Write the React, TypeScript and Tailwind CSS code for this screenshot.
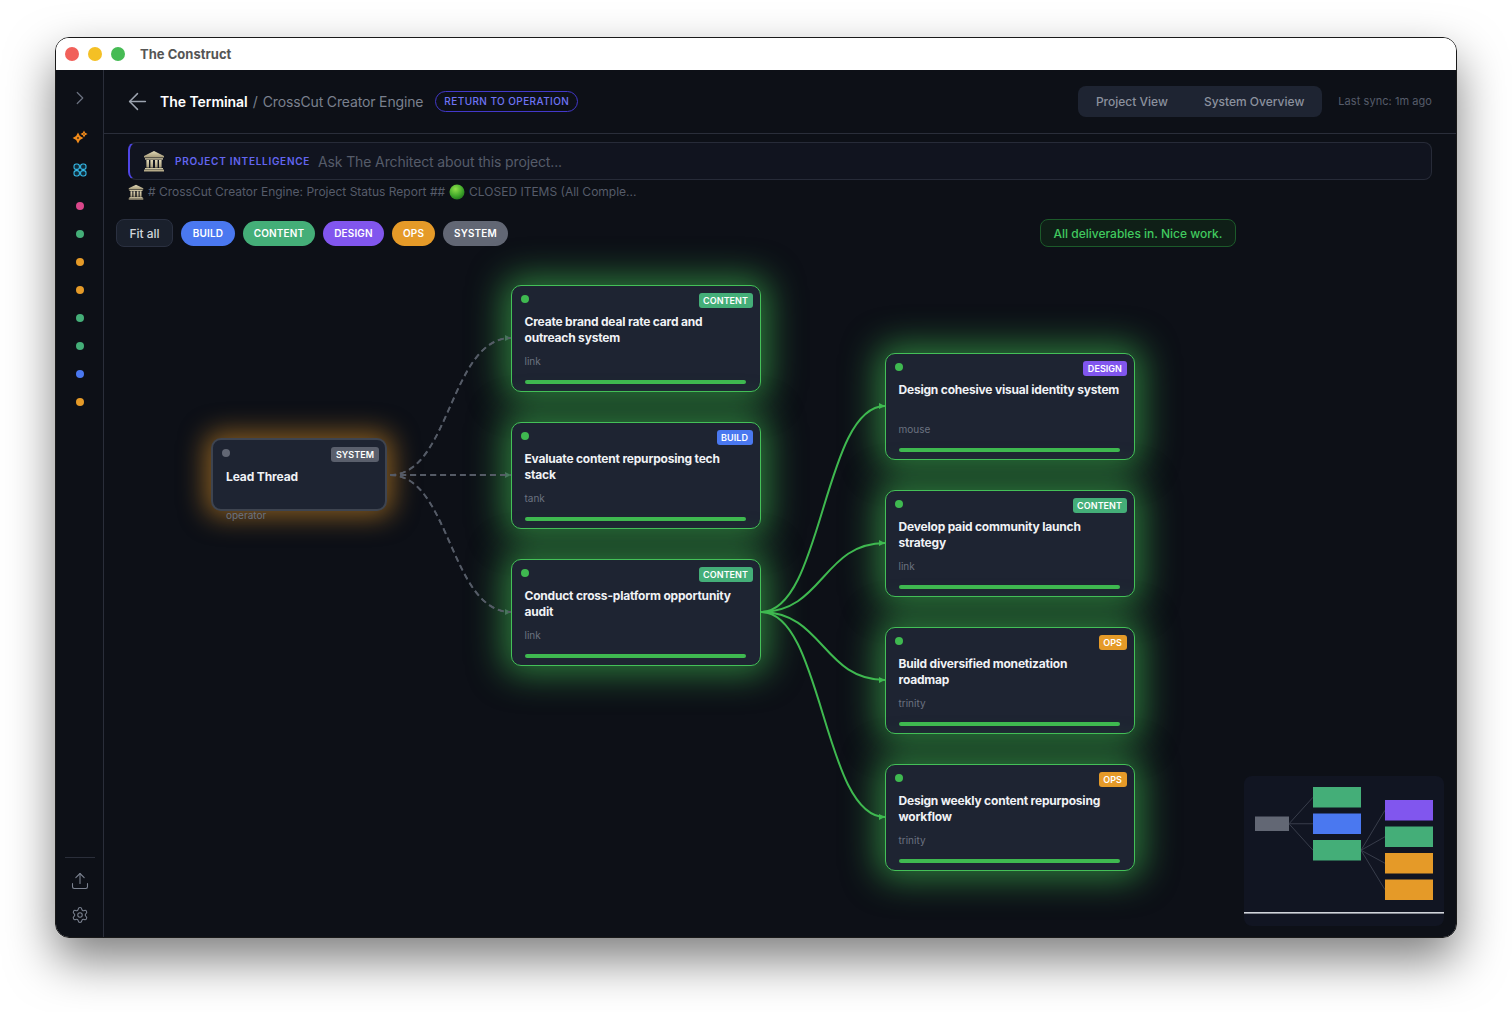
import React from "react";
import { ArrowLeft, ChevronRight, Settings, Upload } from "lucide-react";

const FONT = "font-['Inter','Noto_Sans',sans-serif]";

function Temple({ className }: { className: string }) {
  return (
    <svg viewBox="0 0 22 22" className={className}>
      <defs>
        <linearGradient id="tg" x1="0" y1="0" x2="0" y2="1">
          <stop offset="0" stopColor="#e2d9b8" />
          <stop offset="1" stopColor="#a59a78" />
        </linearGradient>
      </defs>
      <path d="M11 1 L21 6 L21 7.5 L1 7.5 L1 6 Z" fill="url(#tg)" />
      <rect x="2" y="8.2" width="18" height="1.4" fill="#cfc6a3" />
      <rect x="3.4" y="10" width="2.6" height="7.6" fill="url(#tg)" />
      <rect x="7.4" y="10" width="2.6" height="7.6" fill="url(#tg)" />
      <rect x="12" y="10" width="2.6" height="7.6" fill="url(#tg)" />
      <rect x="16" y="10" width="2.6" height="7.6" fill="url(#tg)" />
      <rect x="2" y="18" width="18" height="1.4" fill="#cfc6a3" />
      <rect x="1" y="19.6" width="20" height="1.9" fill="#b5aa88" />
    </svg>
  );
}

function GreenBall() {
  return (
    <svg viewBox="0 0 16 16" className="w-[16px] h-[16px] shrink-0">
      <defs>
        <radialGradient id="gb" cx="0.4" cy="0.3" r="0.8">
          <stop offset="0" stopColor="#8fe04a" />
          <stop offset="0.6" stopColor="#3fa62a" />
          <stop offset="1" stopColor="#1d6b1a" />
        </radialGradient>
      </defs>
      <circle cx="8" cy="8" r="7.5" fill="url(#gb)" />
    </svg>
  );
}

function Sparkle() {
  return (
    <svg viewBox="0 0 16 16" className="w-[16px] h-[16px]">
      <path fillRule="evenodd" d="M6 3.6 L7.9 7.1 L11.4 9 L7.9 10.9 L6 14.4 L4.1 10.9 L0.6 9 L4.1 7.1 Z M6 7.9 L4.9 9 L6 10.1 L7.1 9 Z" fill="#f08a1a" />
      <path fillRule="evenodd" d="M12 1.4 L13.2 3.8 L15.6 5 L13.2 6.2 L12 8.6 L10.8 6.2 L8.4 5 L10.8 3.8 Z M12 4.3 L11.3 5 L12 5.7 L12.7 5 Z" fill="#f08a1a" />
    </svg>
  );
}

function Grid() {
  return (
    <svg viewBox="0 0 14 14" className="w-[14px] h-[14px]" fill="#102c3a" stroke="#35b8e6" strokeWidth="1.1">
      <rect x="1" y="1" width="5.4" height="5.4" rx="2.2" />
      <rect x="7.6" y="1" width="5.4" height="5.4" rx="2.2" />
      <rect x="1" y="7.6" width="5.4" height="5.4" rx="2.2" />
      <rect x="7.6" y="7.6" width="5.4" height="5.4" rx="2.2" />
    </svg>
  );
}

type NodeData = {
  pos: string;
  tag: string;
  tagCls: string;
  title: string;
  sub: string;
};

const nodes: NodeData[] = [
  { pos: "left-[407px] top-[26px]", tag: "CONTENT", tagCls: "bg-[#44ae78]", title: "Create brand deal rate card and outreach system", sub: "link" },
  { pos: "left-[407px] top-[163px]", tag: "BUILD", tagCls: "bg-[#4a78f0]", title: "Evaluate content repurposing tech stack", sub: "tank" },
  { pos: "left-[407px] top-[300px]", tag: "CONTENT", tagCls: "bg-[#44ae78]", title: "Conduct cross-platform opportunity audit", sub: "link" },
  { pos: "left-[781px] top-[94px]", tag: "DESIGN", tagCls: "bg-[#8156ee]", title: "Design cohesive visual identity system", sub: "mouse" },
  { pos: "left-[781px] top-[231px]", tag: "CONTENT", tagCls: "bg-[#44ae78]", title: "Develop paid community launch strategy", sub: "link" },
  { pos: "left-[781px] top-[368px]", tag: "OPS", tagCls: "bg-[#e59a28]", title: "Build diversified monetization roadmap", sub: "trinity" },
  { pos: "left-[781px] top-[505px]", tag: "OPS", tagCls: "bg-[#e59a28]", title: "Design weekly content repurposing workflow", sub: "trinity" },
];

function Tag({ cls, children }: { cls: string; children: React.ReactNode }) {
  return (
    <span className={`h-[15px] px-[4.5px] rounded-[3px] text-[9px] leading-[15px] font-semibold tracking-[0.05px] text-white ${cls}`}>
      {children}
    </span>
  );
}

function Card({ n }: { n: NodeData }) {
  return (
    <div className={`absolute ${n.pos} w-[250px] h-[107px] rounded-[10px] border-[1.5px] border-[#44c058] bg-[#1e2432] pt-[6.5px] pr-[7.5px] pl-[12.5px] flex flex-col shadow-[0_0_34px_8px_rgba(63,185,80,0.62)]`}>
      <div className="flex justify-between items-start h-[15px] shrink-0">
        <span className="w-[8px] h-[8px] -ml-[4px] mt-[2px] rounded-full bg-[#3fb950]" />
        <Tag cls={n.tagCls}>{n.tag}</Tag>
      </div>
      <div className="mt-[6px] h-[32px] shrink-0 mr-[6.5px] text-[12px] leading-[16px] font-[650] text-[#f0f2f5] tracking-[-0.2px]">{n.title}</div>
      <div className="mt-[8px] text-[10px] leading-[14px] shrink-0 text-[#6b7280]">{n.sub}</div>
      <div className="mt-[12px] mr-[6.5px] h-[4px] shrink-0 rounded-full bg-[#3fb950]" />
    </div>
  );
}

function Edges() {
  const dashed = [79, 216, 353];
  const solid = [147, 284, 421, 558];
  return (
    <svg className="absolute left-0 top-0 w-full h-full" fill="none">
      {dashed.map((y) => (
        <path key={y} d={`M286 216 C 346 216, 346 ${y}, 407 ${y}`} stroke="#4b5261" strokeWidth="1.8" strokeDasharray="6 4" />
      ))}
      {dashed.map((y) => (
        <path key={`a${y}`} d={`M401 ${y - 3} L407 ${y} L401 ${y + 3} Z`} fill="#4b5261" />
      ))}
      {solid.map((y) => (
        <path key={`b${y}`} d={`M775 ${y - 3} L781 ${y} L775 ${y + 3} Z`} fill="#3fb950" />
      ))}
    </svg>
  );
}

function GreenEdges() {
  const solid = [147, 284, 421, 558];
  return (
    <svg className="absolute left-0 top-0 w-full h-full pointer-events-none" fill="none">
      {solid.map((y) => (
        <path key={y} d={`M657 353 C 719 353, 719 ${y}, 781 ${y}`} stroke="#3fb950" strokeWidth="2" />
      ))}
      {[79, 216, 353].map((y) => (
        <path key={y} d={`M286 216 C 346 216, 346 ${y}, 407 ${y}`} stroke="#555b66" strokeWidth="1.8" strokeDasharray="6 4" />
      ))}
    </svg>
  );
}

function Minimap() {
  const boxes = [
    { x: 11, y: 40.5, w: 34, h: 14.5, f: "#626774" },
    { x: 69, y: 11, w: 48, h: 20.5, f: "#44ae78" },
    { x: 69, y: 37.5, w: 48, h: 20.5, f: "#4a78f0" },
    { x: 69, y: 64, w: 48, h: 20.5, f: "#44ae78" },
    { x: 141, y: 24, w: 48, h: 20.5, f: "#8156ee" },
    { x: 141, y: 50.5, w: 48, h: 20.5, f: "#44ae78" },
    { x: 141, y: 77, w: 48, h: 20.5, f: "#e59a28" },
    { x: 141, y: 103.5, w: 48, h: 20.5, f: "#e59a28" },
  ];
  return (
    <div className="absolute right-[12px] bottom-[11px] w-[200px] h-[150px] rounded-[8px] bg-[#111522] overflow-hidden">
      <svg viewBox="0 0 200 150" className="w-[200px] h-[150px]">
        {[21.25, 47.75, 74.25].map((y) => (
          <line key={y} x1="45" y1="47.75" x2="69" y2={y} stroke="#383d4b" strokeWidth="1" />
        ))}
        {[34.25, 60.75, 87.25, 113.75].map((y) => (
          <line key={y} x1="117" y1="74.25" x2="141" y2={y} stroke="#383d4b" strokeWidth="1" />
        ))}
        {boxes.map((b, i) => (
          <rect key={i} x={b.x} y={b.y} width={b.w} height={b.h} fill={b.f} />
        ))}
        <rect x="0" y="136" width="200" height="1.6" fill="#d1d5db" />
      </svg>
    </div>
  );
}

export default function App() {
  const dots = ["bg-[#d9468a]", "bg-[#44ae78]", "bg-[#e59a28]", "bg-[#e59a28]", "bg-[#44ae78]", "bg-[#44ae78]", "bg-[#4a78f0]", "bg-[#e59a28]"];
  return (
    <div className={`w-[1512px] h-[1012px] bg-white pt-[37px] pl-[55px] overflow-hidden ${FONT}`}>
      <div className="w-[1402px] h-[901px] rounded-[14px] border border-[#1a1a1a] overflow-hidden flex flex-col shadow-[0_22px_48px_rgba(0,0,0,0.5)]">
        {/* title bar */}
        <div className="h-[32px] shrink-0 bg-white flex items-center pl-[9px]">
          <span className="w-[14px] h-[14px] rounded-full bg-[#f1605a]" />
          <span className="w-[14px] h-[14px] rounded-full bg-[#f4c025] ml-[9px]" />
          <span className="w-[14px] h-[14px] rounded-full bg-[#46bb54] ml-[9px]" />
          <span className="ml-[15px] mt-[1px] text-[13px] font-bold tracking-[0.02px] text-[#555555]">The Construct</span>
        </div>
        <div className="flex-1 flex min-h-0 bg-[#0d1017]">
          {/* sidebar */}
          <div className="w-[48px] shrink-0 border-r border-[#2a2e3a] flex flex-col items-center">
            <ChevronRight className="mt-[17px] w-[22px] h-[22px] text-[#6b7280]" strokeWidth={1.3} />
            <div className="mt-[20px]"><Sparkle /></div>
            <div className="mt-[18px]"><Grid /></div>
            <div className="mt-[25px] flex flex-col gap-[20px]">
              {dots.map((d, i) => (
                <span key={i} className={`block w-[8px] h-[8px] rounded-full ${d}`} />
              ))}
            </div>
            <div className="mt-auto w-[30px] border-t border-[#2a2e3a]" />
            <Upload className="mt-[13px] w-[20px] h-[20px] text-[#7b8290]" strokeWidth={1.3} />
            <Settings className="mt-[15px] mb-[13px] w-[18px] h-[18px] text-[#7b8290]" strokeWidth={1.4} />
          </div>
          {/* main */}
          <div className="flex-1 min-w-0 flex flex-col">
            <div className="h-[64px] shrink-0 border-b border-[#2a2e3a] flex items-center pl-[24px] pr-[24px]">
              <ArrowLeft className="-ml-[4.5px] w-[27px] h-[27px] text-[#9ca3af]" strokeWidth={1.3} />
              <span className="ml-[9.5px] text-[14px] font-semibold tracking-[-0.05px] text-white">The Terminal</span>
              <span className="ml-[5px] text-[14px] text-[#7a808e]">/</span>
              <span className="ml-[5px] text-[14px] tracking-[-0.15px] text-[#7a808e]">CrossCut Creator Engine</span>
              <span className="ml-[12px] h-[21px] px-[8px] rounded-full border border-[#4338ca] text-[10px] leading-[19px] font-medium tracking-[0.42px] text-[#6f74f5]">RETURN TO OPERATION</span>
              <div className="ml-auto h-[31px] rounded-[8px] bg-[#1e2432] flex items-center pl-[18px] pr-[18px] gap-[36px] text-[12px] font-medium text-[#8b919e]">
                <span>Project View</span>
                <span>System Overview</span>
              </div>
              <span className="ml-[16px] text-[11px] tracking-[0.06px] text-[#565c6a]">Last sync: 1m ago</span>
            </div>
            <div className="shrink-0 pl-[24px] pr-[24px] pt-[8px]">
              <div className="h-[38px] rounded-[8px] border border-[#272b38] border-l-2 border-l-[#4f46e5] bg-[#11141f] flex items-center pl-[13px]">
                <Temple className="w-[22px] h-[22px]" />
                <span className="ml-[10px] text-[10px] font-semibold tracking-[0.72px] text-[#6366f1]">PROJECT INTELLIGENCE</span>
                <span className="ml-[8px] text-[14px] tracking-[-0.13px] text-[#565c6a]">Ask The Architect about this project...</span>
              </div>
              <div className="mt-[3px] h-[17px] flex items-center text-[12px] text-[#565c6a]">
                <Temple className="w-[16px] h-[16px]" />
                <span className="ml-[4px]"># CrossCut Creator Engine: Project Status Report ##</span>
                <span className="ml-[4px]"><GreenBall /></span>
                <span className="ml-[4px]">CLOSED ITEMS (All Comple...</span>
              </div>
            </div>
            <div className="shrink-0 mt-[19px] pl-[12px] h-[28px] flex items-center">
              <span className="h-[28px] w-[57px] rounded-[8px] border border-[#2a3040] bg-[#1a202c] text-[12px] font-medium leading-[27px] text-center text-[#d1d5db]">Fit all</span>
              <div className="ml-[8px] flex gap-[8px] text-[10px] font-semibold tracking-[0.15px] text-center text-white">
                <span className="h-[25px] leading-[25px] w-[54px] rounded-full bg-[#4a78f0]">BUILD</span>
                <span className="h-[25px] leading-[25px] w-[72px] rounded-full bg-[#44ae78]">CONTENT</span>
                <span className="h-[25px] leading-[25px] w-[61px] rounded-full bg-[#8156ee]">DESIGN</span>
                <span className="h-[25px] leading-[25px] w-[43px] rounded-full bg-[#e59a28]">OPS</span>
                <span className="h-[25px] leading-[25px] w-[65px] rounded-full bg-[#626774]">SYSTEM</span>
              </div>
              <span className="ml-[532px] h-[28px] w-[196px] rounded-[8px] border border-[#1c5a2a] bg-[#0f1f17] text-[12px] leading-[27px] font-medium text-center text-[#41c95f]">All deliverables in. Nice work.</span>
            </div>
            {/* canvas */}
            <div className="relative flex-1 mt-[12px] min-h-0">
              <Edges />
              <div className="absolute left-[107px] top-[179px] w-[176px] h-[73px] rounded-[10px] border-2 border-[#3e4450] bg-[#1e2432] pt-[6.5px] pr-[6.5px] pl-[13px] flex flex-col shadow-[0_0_26px_6px_rgba(227,150,40,0.55)]">
                <div className="flex justify-between items-start h-[15px] shrink-0">
                  <span className="w-[8px] h-[8px] -ml-[4px] mt-[2px] rounded-full bg-[#626774]" />
                  <Tag cls="bg-[#5a5f6c]">SYSTEM</Tag>
                </div>
                <div className="mt-[7px] h-[32px] shrink-0 text-[12px] leading-[16px] font-[650] tracking-[-0.12px] text-[#f0f2f5]">Lead Thread</div>
                <div className="mt-[7px] text-[10px] leading-[14px] shrink-0 text-[#6b7280]">operator</div>
              </div>
              {nodes.map((n) => (
                <Card key={n.title} n={n} />
              ))}
              <GreenEdges />
              <Minimap />
            </div>
          </div>
        </div>
      </div>
    </div>
  );
}
